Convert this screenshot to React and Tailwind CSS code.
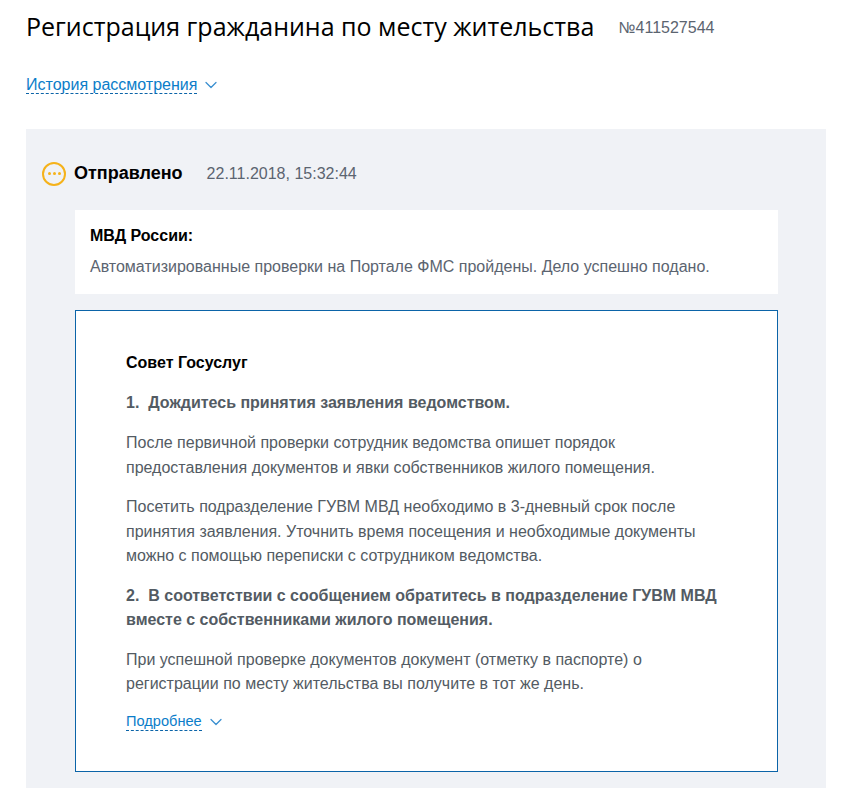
import { ChevronDown } from 'lucide-react';

const SANS = "font-['Liberation_Sans',Arial,sans-serif]";

function DashedLink({ children }) {
  return (
    <a className="inline-flex items-center text-[#0b7dc9]">
      <span className="border-b border-dashed border-[#0b64a8] leading-[17px]">{children}</span>
      <ChevronDown size={20} strokeWidth={1.5} className="ml-[4px] text-[#3a8fd0]" />
    </a>
  );
}

export default function App() {
  return (
    <div className={`${SANS} w-[860px] h-[808px] bg-white pl-[26px] overflow-hidden`}>
      <div className="flex items-center pt-[8px]">
        <h1 className="font-['Open_Sans',sans-serif] text-[25px] leading-[36px] text-black">
          Регистрация гражданина по месту жительства
        </h1>
        <span className="ml-[24px] mt-[4px] text-[16px] text-[#5b6470]">№411527544</span>
      </div>

      <div className="mt-[29px] h-[20px] text-[16px]">
        <DashedLink>История рассмотрения</DashedLink>
      </div>

      <div className="mt-[36px] w-[800px] h-[659px] bg-[#f0f2f6] pt-[32px] pl-[16px]">
        <div className="flex items-center h-[25px]">
          <div className="w-[24px] h-[24px] rounded-full border-2 border-[#f5b21a] flex items-center justify-center gap-[2px]">
            <i className="w-[3px] h-[3px] rounded-full bg-[#f5b21a]" />
            <i className="w-[3px] h-[3px] rounded-full bg-[#f5b21a]" />
            <i className="w-[3px] h-[3px] rounded-full bg-[#f5b21a]" />
          </div>
          <b className="ml-[8px] text-[18px] text-black">Отправлено</b>
          <span className="ml-[24px] text-[16px] text-[#5b6470]">22.11.2018, 15:32:44</span>
        </div>

        <div className="mt-[24px] ml-[33px] w-[703px] h-[84px] bg-white pt-[15px] pl-[15px] text-[16px] leading-[22px]">
          <b className="block text-black">МВД России:</b>
          <p className="mt-[9px] text-[#5b6470]">
            Автоматизированные проверки на Портале ФМС пройдены. Дело успешно подано.
          </p>
        </div>

        <div className="mt-[16px] ml-[33px] w-[703px] h-[462px] bg-white border border-[#0b64a8] pt-[40px] pl-[50px] pr-[40px] text-[16px] leading-[24.5px] text-[#535b63]">
          <b className="block text-black">Совет Госуслуг</b>
          <b className="block mt-[15px]">1.&nbsp; Дождитесь принятия заявления ведомством.</b>
          <p className="mt-[16px]">
            После первичной проверки сотрудник ведомства опишет порядок<br />
            предоставления документов и явки собственников жилого помещения.
          </p>
          <p className="mt-[15px]">
            Посетить подразделение ГУВМ МВД необходимо в 3-дневный срок после<br />
            принятия заявления. Уточнить время посещения и необходимые документы<br />
            можно с помощью переписки с сотрудником ведомства.
          </p>
          <b className="block mt-[15px]">
            2.&nbsp; В соответствии с сообщением обратитесь в подразделение ГУВМ МВД<br />
            вместе с собственниками жилого помещения.
          </b>
          <p className="mt-[15px]">
            При успешной проверке документов документ (отметку в паспорте) о<br />
            регистрации по месту жительства вы получите в тот же день.
          </p>
          <div className="mt-[12px] h-[20px] text-[14.6px]">
            <DashedLink>Подробнее</DashedLink>
          </div>
        </div>
      </div>
    </div>
  );
}
